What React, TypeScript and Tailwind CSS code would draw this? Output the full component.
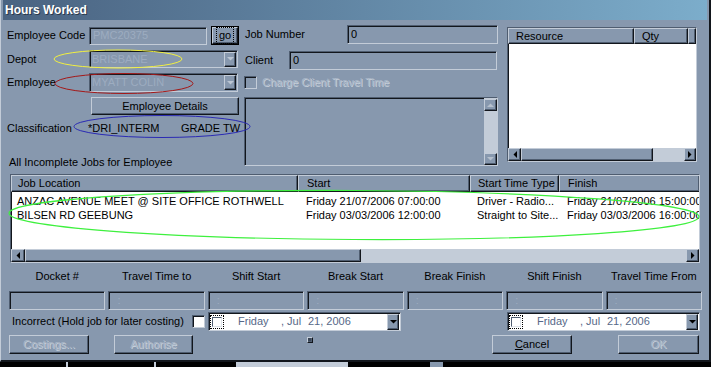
import React from 'react'

// classic 3D edges, blue-grey desktop scheme
const SUNKEN =
  'border border-t-[#4f5d70] border-l-[#4f5d70] border-r-[#c3ccd8] border-b-[#c3ccd8] shadow-[inset_1px_1px_0_#12161c]'
const RAISED =
  'border border-t-[#c3ccd8] border-l-[#c3ccd8] border-r-[#12161c] border-b-[#12161c] shadow-[inset_-1px_-1px_0_#4f5d70]'
const ETCHED = 'text-[#a9b6c7] [text-shadow:1px_1px_0_#c6cfda]'
const DIM = 'text-[#9dacc0]'

type Dir = 'up' | 'down' | 'left' | 'right'

const Arrow = ({ dir, color = '#000' }: { dir: Dir; color?: string }) => {
  const vertical = dir === 'up' || dir === 'down'
  const pts = {
    up: '0,4 7,4 3.5,0.5',
    down: '0,0 7,0 3.5,3.5',
    left: '4,0 4,7 0.5,3.5',
    right: '0,0 0,7 3.5,3.5',
  }[dir]
  return (
    <svg width={vertical ? 7 : 4} height={vertical ? 4 : 7}>
      <polygon points={pts} fill={color} />
    </svg>
  )
}

const ScrollBtn = ({ dir, className, color }: { dir: Dir; className: string; color?: string }) => (
  <div className={`flex shrink-0 items-center justify-center bg-[#8798ae] ${RAISED} ${className}`}>
    <Arrow dir={dir} color={color} />
  </div>
)

const HScroll = ({ left, thumb, right }: { left: string; thumb: string; right: string }) => (
  <div className="flex h-[13px] shrink-0 bg-[#c3ccd8]">
    <ScrollBtn dir="left" className={left} />
    <div className={`h-full bg-[#8798ae] ${RAISED} ${thumb}`} />
    <div className="flex-1" />
    <ScrollBtn dir="right" className={right} />
  </div>
)

const HeaderCell = ({ className, children }: { className: string; children?: React.ReactNode }) => (
  <div className={`flex h-full shrink-0 items-center overflow-hidden whitespace-nowrap bg-[#8798ae] ${RAISED} ${className}`}>
    {children}
  </div>
)

const Combo = ({ text }: { text: string }) => (
  <div className={`flex h-full w-[149px] items-center ${SUNKEN}`}>
    <span className={`flex-1 pl-[2px] ${DIM}`}>{text}</span>
    <div className={`mr-[1px] flex h-[15px] w-[12px] items-center justify-center bg-[#8798ae] ${RAISED}`}>
      <Arrow dir="down" color="#bcc6d3" />
    </div>
  </div>
)

const DatePicker = ({ className }: { className: string }) => (
  <div className={`flex h-full w-[193px] items-center bg-white text-[#566888] ${SUNKEN} ${className}`}>
    <div className="ml-[1px] flex h-[14px] w-[14px] items-center justify-center border border-dotted border-black">
      <div className="h-[10px] w-[10px] border border-t-[#4f5d70] border-l-[#4f5d70] border-r-[#dfe4ea] border-b-[#dfe4ea] bg-white" />
    </div>
    <span className="ml-[14px] w-[43px]">Friday</span>
    <span className="w-[27px] whitespace-pre">, Jul</span>
    <span>21, 2006</span>
    <div className={`ml-auto mr-[1px] flex h-[16px] w-[12px] items-center justify-center bg-[#8798ae] ${RAISED}`}>
      <Arrow dir="down" />
    </div>
  </div>
)

const fields = ['Docket #', 'Travel Time to', 'Shift Start', 'Break Start', 'Break Finish', 'Shift Finish', 'Travel Time From']

const jobs = [
  ['ANZAC AVENUE MEET @ SITE OFFICE ROTHWELL', 'Friday 21/07/2006 07:00:00', 'Driver - Radio...', 'Friday 21/07/2006 15:00:00'],
  ['BILSEN RD GEEBUNG', 'Friday 03/03/2006 12:00:00', 'Straight to Site...', 'Friday 03/03/2006 16:00:00'],
]

export default function App() {
  return (
    <div className="relative h-[367px] w-[711px] overflow-hidden bg-black font-['Liberation_Sans',Arial,sans-serif] text-[11px] leading-none text-black">
      <div className="flex h-[362px] w-[711px] flex-col border-l border-r-2 border-b-2 border-l-[#c3ccd8] border-r-[#12161c] border-b-[#12161c] bg-[#8798ae] px-[2px]">
        {/* Title bar */}
        <div className="flex h-[20px] shrink-0 items-center bg-linear-to-r from-[#4a6381] to-[#7cadcb] pl-[2px] text-[12px] font-bold text-white [text-shadow:1px_1px_0_#2c3a4c]">
          Hours Worked
        </div>

        {/* Top section */}
        <div className="mt-[5px] flex h-[144px] shrink-0">
          {/* Left column */}
          <div className="ml-[4px] flex w-[232px] flex-col">
            <div className="mt-[1px] flex h-[19px] items-center">
              <span className="w-[82px]">Employee Code</span>
              <div className={`flex h-[18px] w-[118px] items-center pl-[3px] ${DIM} ${SUNKEN}`}>PMC20375</div>
              <div className="ml-[4px] h-[19px] w-[28px] border border-black">
                <div className={`flex h-full w-full items-center justify-center bg-[#8798ae] ${RAISED}`}>
                  <span className="border border-dotted border-black px-[2px] py-[2px]">go</span>
                </div>
              </div>
            </div>
            <div className="mt-[5px] flex h-[18px] items-center">
              <span className="w-[82px]">Depot</span>
              <Combo text="BRISBANE" />
            </div>
            <div className="mt-[5px] flex h-[19px] items-center">
              <span className="w-[82px]">Employee</span>
              <Combo text="MYATT COLIN" />
            </div>
            <div className="mt-[5px] flex h-[18px]">
              <div className={`ml-[84px] flex w-[148px] items-center justify-center ${RAISED}`}>Employee Details</div>
            </div>
            <div className="mt-[3px] flex h-[20px] items-center whitespace-nowrap">
              <span className="w-[81px] shrink-0">Classification</span>
              <span className="w-[93px] shrink-0">*DRI_INTERM</span>
              <span className="shrink-0">GRADE TW</span>
            </div>
            <div className="ml-[2px] mt-[19px] h-[12px] whitespace-nowrap">All Incomplete Jobs for Employee</div>
          </div>

          {/* Middle column */}
          <div className="ml-[5px] flex w-[254px] flex-col">
            <div className="flex h-[19px] items-center">
              <span className="w-[103px] pl-[1px]">Job Number</span>
              <div className={`flex h-full w-[151px] items-center pl-[3px] ${SUNKEN}`}>0</div>
            </div>
            <div className="mt-[7px] flex h-[19px] items-center">
              <span className="w-[45px] pl-[1px]">Client</span>
              <div className={`flex h-full w-[208px] items-center pl-[3px] ${SUNKEN}`}>0</div>
            </div>
            <div className="mt-[6px] flex h-[13px] items-center">
              <div className={`h-[13px] w-[13px] ${SUNKEN}`} />
              <span className={`ml-[5px] ${ETCHED}`}>Charge Client Travel Time</span>
            </div>
            <div className={`mt-[8px] flex h-[69px] w-[254px] justify-end ${SUNKEN}`}>
              <div className="flex w-[13px] flex-col bg-[#c3ccd8] pt-[1px]">
                <ScrollBtn dir="up" className="h-[12px] w-[13px]" color="#b6c0cd" />
                <div className="flex-1" />
                <ScrollBtn dir="down" className="h-[12px] w-[13px]" color="#b6c0cd" />
              </div>
            </div>
          </div>

          {/* Resource list */}
          <div className={`ml-[9px] mt-[2px] flex h-[135px] w-[190px] flex-col bg-white ${SUNKEN}`}>
            <div className="flex h-[16px] shrink-0">
              <HeaderCell className="w-[126px] pl-[7px]">Resource</HeaderCell>
              <HeaderCell className="w-[54px] pl-[7px]">Qty</HeaderCell>
              <HeaderCell className="flex-1" />
            </div>
            <div className="flex-1" />
            <HScroll left="w-[13px]" thumb="w-[132px]" right="w-[12px]" />
          </div>
        </div>

        {/* Jobs list */}
        <div className={`ml-[7px] mt-[5px] flex h-[89px] w-[690px] shrink-0 flex-col bg-white ${SUNKEN}`}>
          <div className="flex h-[17px] shrink-0">
            <HeaderCell className="w-[287px] pl-[6px]">Job Location</HeaderCell>
            <HeaderCell className="w-[172px] pl-[8px]">Start</HeaderCell>
            <HeaderCell className="w-[89px] pl-[7px]">Start Time Type</HeaderCell>
            <HeaderCell className="flex-1 border-r-0 pl-[8px]">Finish</HeaderCell>
          </div>
          <div className="flex-1 pt-[2px]">
            {jobs.map((row) => (
              <div key={row[0]} className="flex h-[14px] items-center whitespace-nowrap">
                <span className="w-[287px] pl-[6px]">{row[0]}</span>
                <span className="w-[172px] pl-[8px]">{row[1]}</span>
                <span className="w-[89px] overflow-hidden pl-[7px]">{row[2]}</span>
                <span className="flex-1 overflow-hidden pl-[8px]">{row[3]}</span>
              </div>
            ))}
          </div>
          <HScroll left="w-[14px]" thumb="w-[336px]" right="w-[13px]" />
        </div>

        {/* Time fields */}
        <div className="ml-[6px] mt-[8px] grid w-[693px] shrink-0 grid-cols-7 gap-x-[3px]">
          {fields.map((f) => (
            <div key={f} className="h-[12px] text-center whitespace-nowrap">{f}</div>
          ))}
          {fields.map((f, i) => (
            <div key={f + 'i'} className={`mt-[8px] flex h-[19px] items-center pl-[8px] ${DIM} ${SUNKEN}`}>
              {i > 0 ? ':' : ''}
            </div>
          ))}
        </div>

        {/* Incorrect + dates */}
        <div className="mt-[2px] flex h-[19px] shrink-0 items-center">
          <span className="ml-[9px] w-[180px] whitespace-nowrap">Incorrect (Hold job for later costing)</span>
          <div className={`h-[13px] w-[13px] bg-white ${SUNKEN}`} />
          <DatePicker className="ml-[3px]" />
          <DatePicker className="ml-[106px]" />
        </div>

        {/* Buttons */}
        <div className="mt-[4px] flex h-[19px] shrink-0">
          <div className={`ml-[6px] flex w-[80px] items-center justify-center ${ETCHED} ${RAISED}`}>Costings...</div>
          <div className={`ml-[25px] flex w-[79px] items-center justify-center ${ETCHED} ${RAISED}`}>Authorise</div>
          <div className={`ml-[114px] mt-[2px] h-[6px] w-[6px] bg-[#3a4656] ${RAISED}`} />
          <div className={`ml-[179px] flex w-[80px] items-center justify-center ${RAISED}`}>
            <span><span className="underline">C</span>ancel</span>
          </div>
          <div className={`ml-[46px] flex w-[81px] items-center justify-center ${ETCHED} ${RAISED}`}>OK</div>
        </div>
      </div>

      {/* what shows below the window */}
      <div className="flex h-[5px]">
        <div className="ml-[66px] w-[2px] bg-[#c3ccd8]" />
        <div className="ml-[86px] w-[2px] bg-[#c3ccd8]" />
        <div className="ml-[80px] w-[112px] bg-[#c3ccd8]" />
        <div className="ml-[82px] w-[13px] bg-[#8798ae]" />
      </div>

      {/* hand-drawn annotation rings */}
      <svg className="pointer-events-none absolute left-0 top-0" width="711" height="367">
        <ellipse cx="118" cy="59" rx="64" ry="9" fill="none" stroke="#f2f040" strokeWidth="1" />
        <ellipse cx="124" cy="83.5" rx="69" ry="10" fill="none" stroke="#a41818" strokeWidth="1" />
        <ellipse cx="162" cy="126.5" rx="88" ry="11" fill="none" stroke="#2a2ab4" strokeWidth="1" />
        <ellipse cx="354" cy="215" rx="345" ry="24.5" fill="none" stroke="#3ef03e" strokeWidth="1.2" transform="rotate(0.3 354 215)" />
      </svg>
    </div>
  )
}
